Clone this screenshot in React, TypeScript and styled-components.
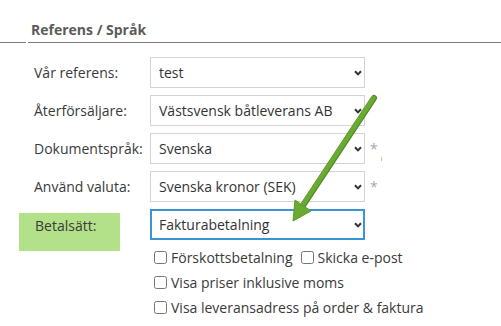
import React from 'react';
import styled, {createGlobalStyle} from 'styled-components';

const GlobalStyle = createGlobalStyle`
  html, body {
    margin: 0;
    padding: 0;
    background: #fff;
  }
  body {
    font-family: "Open Sans", "Liberation Sans", sans-serif;
    font-size: 14px;
    color: #333;
  }
`

const Page = styled.div`
  position: relative;
  width: 501px;
  height: 326px;
  overflow: hidden;
  padding-top: 20px;
  box-sizing: border-box;
`
const HeaderRow = styled.div`
  display: flex;
  gap: 2px;
`
const Stub = styled.div`
  width: 26px;
  border-bottom: 1px solid #7a7a7a;
`
const Heading = styled.h3`
  flex: 1;
  margin: 0;
  padding: 0 0 3px 3px;
  font-size: 14px;
  line-height: 19px;
  font-weight: 700;
  color: #5b5b5b;
  border-bottom: 1px solid #7a7a7a;
`
const Form = styled.div`
  display: flex;
  flex-direction: column;
  gap: 7px;
  padding: 14px 0 0 19px;
`
const Row = styled.div`
  display: flex;
  align-items: flex-start;
  height: 31px;
`
const Label = styled.label<{highlight?: boolean}>`
  width: 131px;
  box-sizing: border-box;
  padding-left: 15px;
  line-height: 19px;
  margin-top: 6px;
  color: #3a3a3a;
  ${p => p.highlight && `
    width: 101px;
    margin: 4px 30px 0 0;
    padding: 3px 0 16px 16px;
    background: #b3e189;
  `}
`
const SelectWrap = styled.div`
  position: relative;
  width: 215px;
  height: 31px;
`
const Select = styled.select<{focused?: boolean}>`
  appearance: none;
  width: 100%;
  height: 100%;
  box-sizing: border-box;
  margin: 0;
  border: ${p => p.focused ? '2px solid #3c93d4' : '1px solid #d4d4d4'};
  border-radius: 0;
  padding: 0 20px 0 ${p => p.focused ? 7 : 8}px;
  background: #fff;
  font-family: "Open Sans", "Liberation Sans", sans-serif;
  font-size: 14px;
  color: #333;
  outline: none;
`
const Chevron = styled.svg`
  position: absolute;
  right: 3px;
  top: 13px;
  width: 8px;
  height: 6px;
  pointer-events: none;
`
const Required = styled.span`
  margin-left: 5px;
  margin-top: 6px;
  line-height: 19px;
  color: #a8a8a8;
`
const Options = styled.div`
  display: flex;
  flex-direction: column;
  margin: -2px 0 0 131px;
`
const OptionLine = styled.div`
  display: flex;
  gap: 4px;
  line-height: 25px;
`
const Check = styled.label`
  display: flex;
  align-items: center;
  color: #3a3a3a;
  input {
    width: 13px;
    height: 13px;
    margin: 0 4px 0 4px;
  }
`
const Overlay = styled.svg`
  position: absolute;
  left: 0;
  top: 0;
  pointer-events: none;
`

type Field = {label: string; value: string; required?: boolean; focused?: boolean; highlight?: boolean}

const fields: Field[] = [
  {label: 'Vår referens:', value: 'test'},
  {label: 'Återförsäljare:', value: 'Västsvensk båtleverans AB'},
  {label: 'Dokumentspråk:', value: 'Svenska', required: true},
  {label: 'Använd valuta:', value: 'Svenska kronor (SEK)', required: true},
  {label: 'Betalsätt:', value: 'Fakturabetalning', focused: true, highlight: true},
]

const Caret = () => (
  <Chevron viewBox="0 0 8 6">
    <path d="M1 1.2 L4 4.4 L7 1.2" fill="none" stroke="#333" strokeWidth="2" />
  </Chevron>
)

const App: React.FC = () => {
  return (
    <Page>
      <GlobalStyle />
      <HeaderRow>
        <Stub />
        <Heading>Referens / Språk</Heading>
      </HeaderRow>
      <Form>
        {fields.map(f => (
          <Row key={f.label}>
            <Label highlight={f.highlight}>{f.label}</Label>
            <SelectWrap>
              <Select focused={f.focused} defaultValue={f.value}>
                <option>{f.value}</option>
              </Select>
              <Caret />
            </SelectWrap>
            {f.required && <Required>*</Required>}
          </Row>
        ))}
        <Options>
          <OptionLine>
            <Check><input type="checkbox" />Förskottsbetalning</Check>
            <Check><input type="checkbox" />Skicka e-post</Check>
          </OptionLine>
          <OptionLine>
            <Check><input type="checkbox" />Visa priser inklusive moms</Check>
          </OptionLine>
          <OptionLine>
            <Check><input type="checkbox" />Visa leveransadress på order &amp; faktura</Check>
          </OptionLine>
        </Options>
      </Form>
      <Overlay width="501" height="326" viewBox="0 0 501 326">
        <line x1="381.5" y1="157" x2="381.5" y2="161" stroke="#a8d77f" strokeWidth="1" />
        <line x1="374" y1="98" x2="302" y2="207" stroke="#4f8a25" strokeWidth="6" strokeLinecap="round" />
        <line x1="373.5" y1="98" x2="301.5" y2="207" stroke="#69ab31" strokeWidth="4.5" strokeLinecap="round" />
        <polygon points="293,221 295,200 311,211" fill="#69ab31" stroke="#5b9a2a" strokeWidth="1" strokeLinejoin="round" />
      </Overlay>
    </Page>
  );
}

export default App;
